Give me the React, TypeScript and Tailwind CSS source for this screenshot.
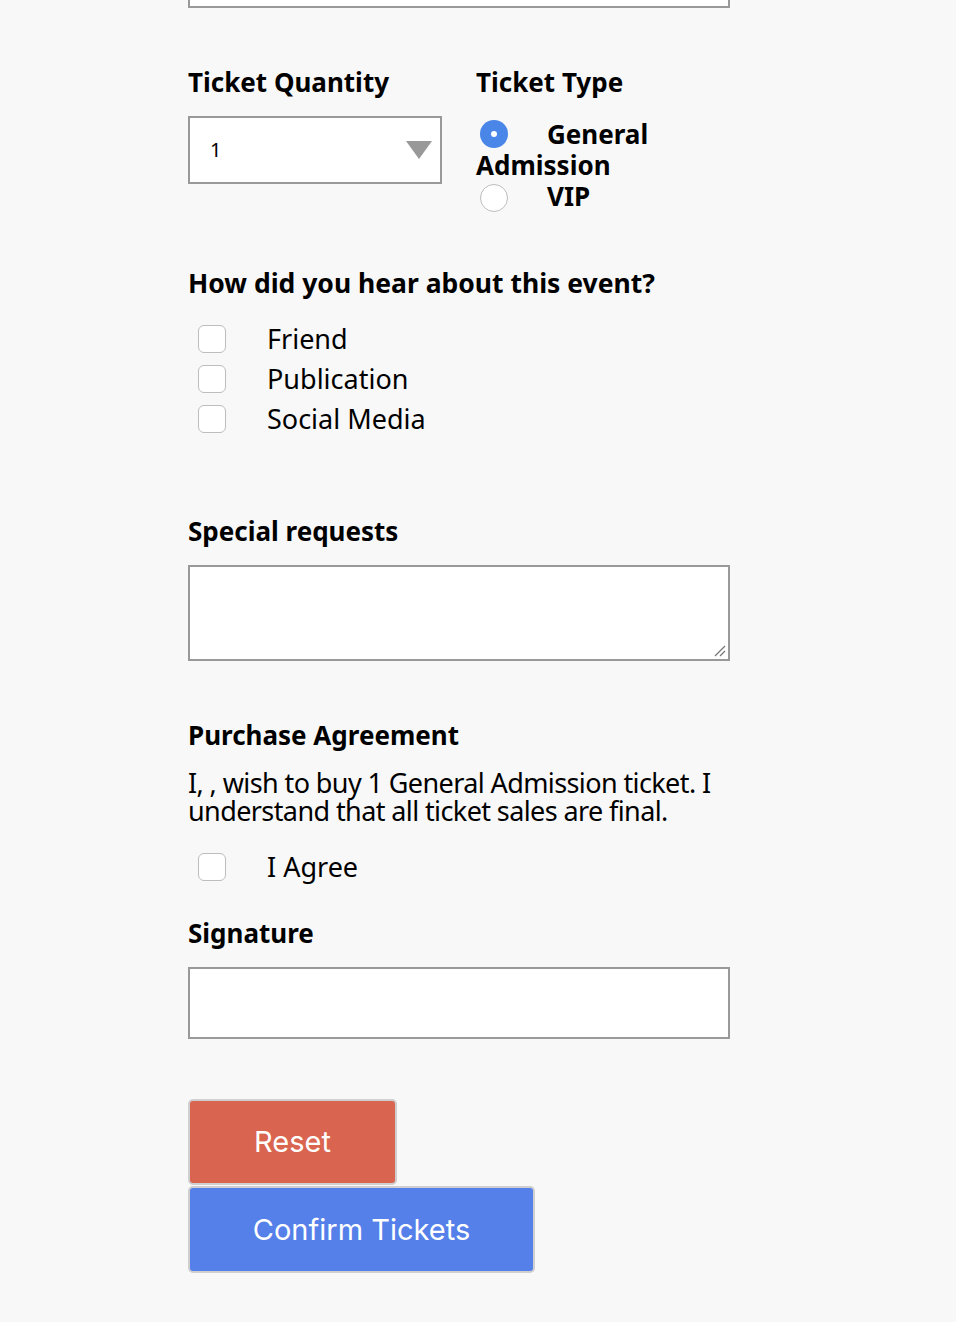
import React from "react";

const labelFont = { fontFamily: '"Noto Sans", "Open Sans", sans-serif' };

function Checkbox({ label }: { label: string }) {
  return (
    <div className="flex items-center h-[40px]">
      <div className="ml-[10px] w-[28px] h-[28px] rounded-[6px] border border-[#bdbdbd] bg-white shrink-0" />
      <span className="ml-[41px] text-[27px] leading-[40px] text-black">{label}</span>
    </div>
  );
}

export default function App() {
  return (
    <div className="min-h-[1322px] bg-[#f8f8f8] text-black" style={labelFont}>
      <div className="ml-[188px] w-[542px]">
        <div className="h-[8px] border-x-2 border-b-2 border-[#999] bg-white" />

        <div className="mt-[58px] flex">
          <div className="w-[288px]">
            <div className="text-[26px] leading-[32px] font-bold">Ticket Quantity</div>
            <div className="mt-[18px] w-[254px] h-[68px] border-2 border-[#999] bg-white flex items-center justify-between pl-[20px] pr-[8px]">
              <span className="text-[20px]">1</span>
              <svg width="26" height="18" viewBox="0 0 26 18"><polygon points="0,0 26,0 13,18" fill="#999" /></svg>
            </div>
          </div>
          <div className="w-[254px]">
            <div className="text-[26px] leading-[32px] font-bold">Ticket Type</div>
            <div className="mt-[21px] text-[26px] leading-[31px] font-bold">
              <div>
                <span className="inline-block align-[-4px] ml-[4px] mr-[39px] w-[28px] h-[28px] rounded-full bg-[#4a86e8] relative">
                  <span className="absolute left-[11px] top-[11px] w-[6px] h-[6px] rounded-full bg-white" />
                </span>
                General Admission
              </div>
              <div>
                <span className="inline-block align-[-6px] ml-[4px] mr-[39px] w-[28px] h-[28px] rounded-full border border-[#bdbdbd] bg-white" />
                VIP
              </div>
            </div>
          </div>
        </div>

        <div className="mt-[55px] text-[26.5px] leading-[32px] font-bold">How did you hear about this event?</div>
        <div className="mt-[20px]">
          <Checkbox label="Friend" />
          <Checkbox label="Publication" />
          <Checkbox label="Social Media" />
        </div>

        <div className="mt-[76px] text-[26px] leading-[32px] font-bold">Special requests</div>
        <div className="mt-[18px] h-[96px] border-2 border-[#999] bg-white relative">
          <svg className="absolute right-[2px] bottom-[2px]" width="14" height="14" viewBox="0 0 14 14">
            <line x1="13" y1="3" x2="3" y2="13" stroke="#777" strokeWidth="1.2" />
            <line x1="13" y1="8" x2="8" y2="13" stroke="#777" strokeWidth="1.2" />
          </svg>
        </div>

        <div className="mt-[58px] text-[26px] leading-[32px] font-bold">Purchase Agreement</div>
        <p className="mt-[18px] text-[27px] leading-[28px] tracking-[-0.6px]">
          I, , wish to buy 1 General Admission ticket. I understand that all ticket sales are final.
        </p>
        <div className="mt-[22px]">
          <Checkbox label="I Agree" />
        </div>

        <div className="mt-[30px] text-[26px] leading-[32px] font-bold">Signature</div>
        <div className="mt-[18px] h-[72px] border-2 border-[#999] bg-white" />

        <div className="mt-[60px] flex flex-col items-start" style={{ fontFamily: 'Inter, "Noto Sans", sans-serif' }}>
          <button className="w-[209px] h-[86px] rounded-[5px] border-2 border-[#cfcfcf] bg-[#d9644f] text-white text-[29px]">Reset</button>
          <button className="mt-[1px] w-[347px] h-[87px] rounded-[5px] border-2 border-[#cfcfcf] bg-[#5580e9] text-white text-[29px]">Confirm Tickets</button>
        </div>
      </div>
    </div>
  );
}
